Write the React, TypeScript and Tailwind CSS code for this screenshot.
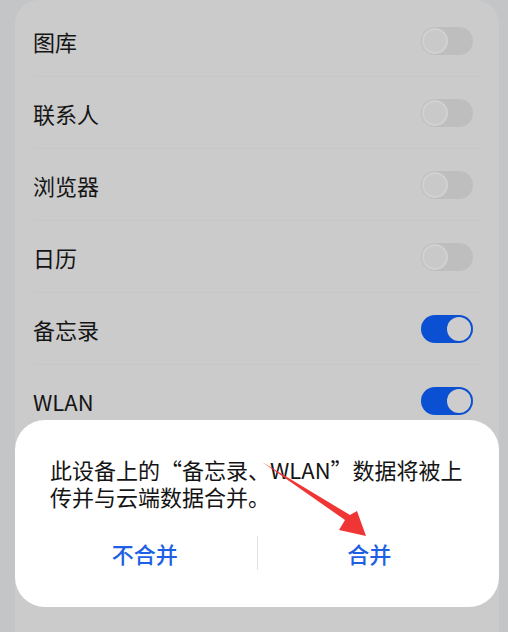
import React from 'react';

const rows = [
  { label: '图库', on: false },
  { label: '联系人', on: false },
  { label: '浏览器', on: false },
  { label: '日历', on: false },
  { label: '备忘录', on: true },
  { label: 'WLAN', on: true },
];

const Toggle: React.FC<{ on: boolean }> = ({ on }) =>
  on ? (
    <div className="flex h-[28px] w-[52px] items-center justify-end rounded-full bg-[#0b4fd2] px-[2px]">
      <div className="h-[24px] w-[24px] rounded-full bg-[#cdcdcd]" />
    </div>
  ) : (
    <div className="flex h-[28px] w-[52px] items-center rounded-full bg-[#bebebe] px-[1px]">
      <div className="h-[26px] w-[26px] rounded-full border-2 border-[#d1d1d1] bg-[#c9c9c9]" />
    </div>
  );

const App: React.FC = () => {
  return (
    <div
      className="relative h-[632px] w-[508px] overflow-hidden bg-[#c4c5c6]"
      style={{ fontFamily: '"Noto Sans CJK SC", "Noto Sans", sans-serif' }}
    >
      <div className="ml-[15px] mr-[9px] h-full rounded-t-[24px] bg-[#cbcbcb] pl-[18px] pr-[17px] pt-[5px]">
        {rows.map((r, i) => (
          <div
            key={r.label}
            className={`flex h-[72px] items-center justify-between pr-[9px] ${i < rows.length - 1 ? 'border-b border-[#c7c7c7]' : ''}`}
          >
            <span className="text-[22px] leading-none text-[#151515]">{r.label}</span>
            <Toggle on={r.on} />
          </div>
        ))}
      </div>

      <div className="absolute left-[15px] top-[420px] h-[187px] w-[484px] rounded-[30px] bg-white">
        <p className="px-[35px] pt-[36px] text-[22px] leading-[27px] text-[#141414]">
          此设备上的“备忘录、WLAN”数据将被上传并与云端数据合并。
        </p>
        <div className="mt-[26px] flex items-center px-[18px]">
          <button className="flex-1 text-[22px] font-medium leading-none text-[#1d60e3]">不合并</button>
          <div className="h-[34px] w-px bg-[#e3e3e3]" />
          <button className="flex-1 text-[22px] font-medium leading-none text-[#1d60e3]">合并</button>
        </div>
      </div>

      <svg className="absolute left-0 top-0" width="508" height="632" viewBox="0 0 508 632">
        <path d="M262 462 L345 520 L339 530 L366 536 L357 511 L350 515 Z" fill="#f03535" />
      </svg>
    </div>
  );
};

export default App;
